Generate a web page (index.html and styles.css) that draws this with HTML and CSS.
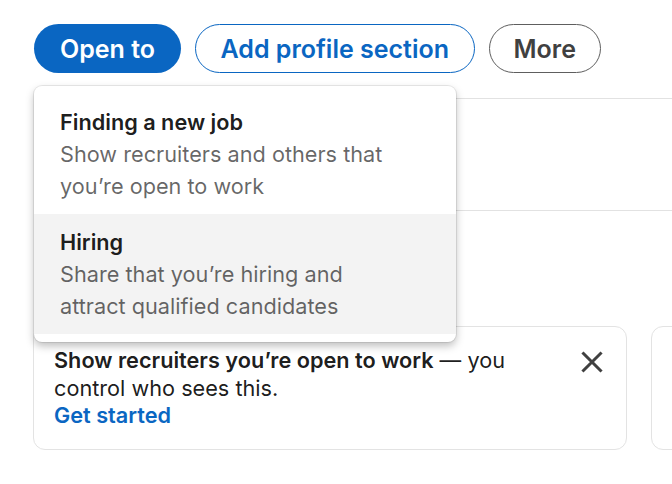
FILE: index.html
```html
<!DOCTYPE html>
<html>
<head>
<meta charset="utf-8">
<link rel="stylesheet" href="styles.css">
</head>
<body>
<div class="page">
  <div class="actions">
    <button class="btn btn-primary">Open to</button>
    <button class="btn btn-secondary">Add profile section</button>
    <button class="btn btn-tertiary">More</button>
  </div>
  <div class="band"></div>
  <div class="cards">
    <div class="card">
      <p class="card-text"><strong>Show recruiters you’re open to work</strong> — you control who sees this.<br><a class="card-link" href="#">Get started</a></p>
      <button class="close" aria-label="Dismiss">
        <svg viewBox="0 0 24 24" width="24" height="24"><path d="M3.5 3.5 L20.5 20.5 M20.5 3.5 L3.5 20.5" stroke="#404040" stroke-width="3" stroke-linecap="square" fill="none"/></svg>
      </button>
    </div>
    <div class="card"></div>
  </div>
  <div class="dropdown">
    <div class="item">
      <div class="item-title">Finding a new job</div>
      <div class="item-desc">Show recruiters and others that you’re open to work</div>
    </div>
    <div class="item item-hover">
      <div class="item-title">Hiring</div>
      <div class="item-desc">Share that you’re hiring and attract qualified candidates</div>
    </div>
  </div>
</div>
</body>
</html>
```
FILE: styles.css
```css
* { box-sizing: border-box; }
body {
  margin: 0;
  background: #fff;
  font-family: Inter, "Noto Sans", "Liberation Sans", sans-serif;
  color: rgba(0,0,0,0.9);
  overflow: hidden;
}
.page {
  position: relative;
  padding: 24px 0 0 34px;
  width: 672px;
  height: 484px;
  overflow: hidden;
}
.actions {
  display: flex;
  gap: 14px;
}
.btn {
  height: 49px;
  border-radius: 25px;
  padding: 0 24.5px;
  font-family: inherit;
  font-size: 25px;
  font-weight: 600;
  background: #fff;
  cursor: pointer;
  white-space: nowrap;
}
.btn-primary {
  background: #0a66c2;
  color: #fff;
  border: 0;
  padding: 0 26px;
}
.btn-secondary {
  color: #0a66c2;
  border: 1.5px solid #0a66c2;
}
.btn-tertiary {
  color: #404040;
  border: 1.5px solid #5e5e5e;
  padding: 0 24px;
}
.band {
  margin-top: 25px;
  height: 113px;
  border-top: 1px solid #e2e2e2;
  border-bottom: 1px solid #e2e2e2;
}
.cards {
  display: flex;
  gap: 24px;
  margin-top: 115px;
  margin-left: -1px;
}
.card {
  flex: 0 0 594px;
  height: 124px;
  border: 1px solid #e3e3e3;
  border-radius: 12px;
  padding: 20px 22px 20px 20px;
  display: flex;
  align-items: flex-start;
}
.card-text {
  flex: 1;
  margin: 0;
  font-size: 21.7px;
  line-height: 27.5px;
  color: rgba(0,0,0,0.9);
  padding-right: 40px;
}
.card-text strong { font-weight: 600; }
.card-link {
  color: #0a66c2;
  font-weight: 600;
  text-decoration: none;
}
.close {
  border: 0;
  background: none;
  padding: 0;
  width: 24px;
  height: 24px;
  margin-top: 3px;
}
.close svg { display: block; }
.dropdown {
  position: absolute;
  top: 86px;
  left: 34px;
  width: 422px;
  background: #fff;
  border-radius: 8px;
  padding: 8px 0;
  box-shadow: 0 0 0 1px rgba(0,0,0,0.08), 0 4px 8px rgba(0,0,0,0.26);
}
.item {
  padding: 12px 56px 12px 26px;
  font-size: 21.7px;
  line-height: 32px;
}
.item-hover { background: #f3f3f3; }
.item-title {
  font-weight: 600;
  color: rgba(0,0,0,0.9);
}
.item-desc {
  color: rgba(0,0,0,0.6);
}
```
